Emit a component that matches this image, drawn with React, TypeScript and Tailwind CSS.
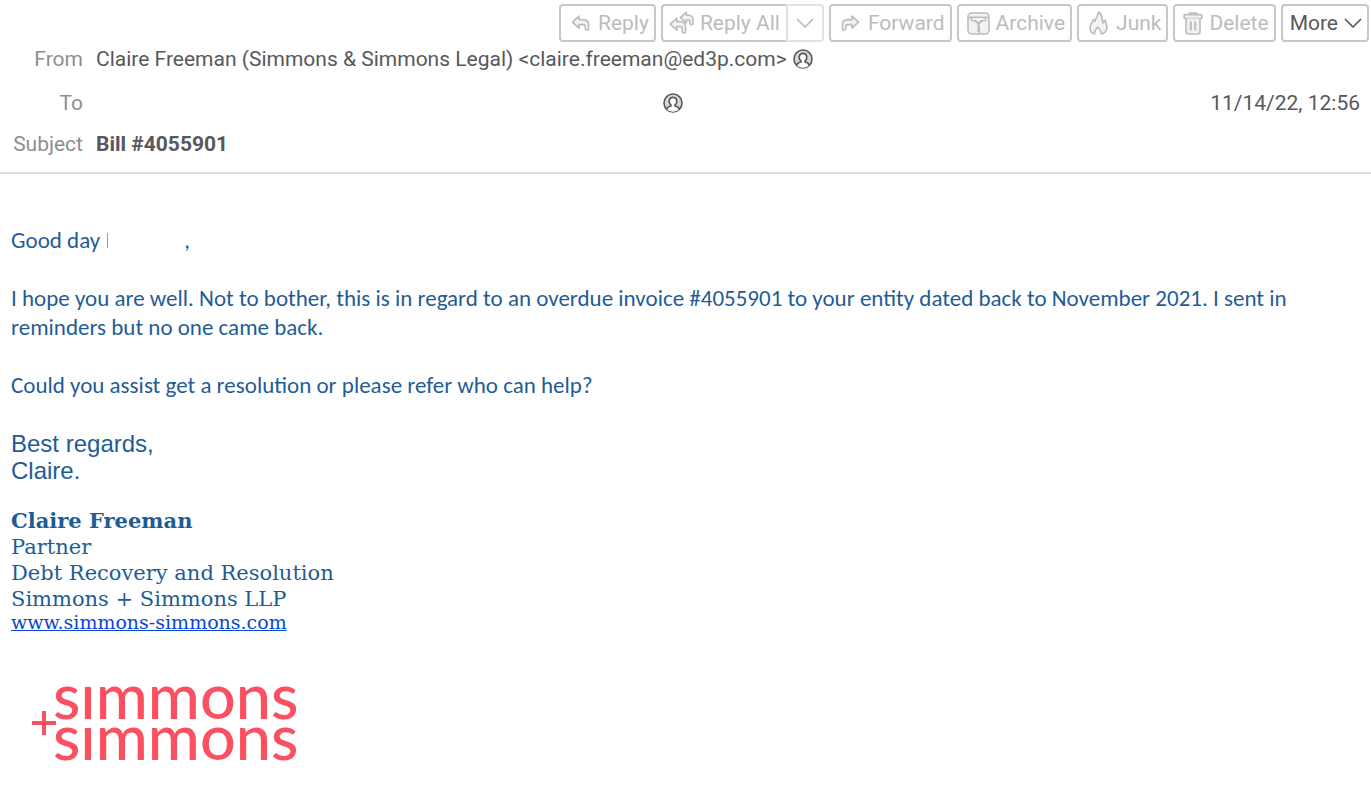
import type { ReactNode } from "react";

function ReplyIcon() {
  return (
    <svg width="19" height="17" viewBox="0 0 19 17" fill="#f2f2f2" stroke="currentColor" strokeWidth="1.6" strokeLinejoin="round" aria-hidden="true">
      <path d="M1.5 7.2 8 1.2V4.6H12C15.6 4.6 17.6 6.6 17.6 10V14.2Q16 16 14.2 14.2V11.4Q14.2 9.6 12.4 9.6H8V13.2Z" />
    </svg>
  );
}

function ReplyAllIcon() {
  return (
    <svg width="25" height="24" viewBox="0 0 25 24" fill="#f2f2f2" stroke="currentColor" strokeWidth="1.6" strokeLinejoin="round" aria-hidden="true">
      <path d="M11.4 6.6 17.4 1.2V4.2H19.4C22.4 4.2 24 6 24 9V13Q22.6 14.6 21 13V10.6Q21 9 19.3 9H17.4V12Z" />
      <path d="M1.2 13.2 7.8 7.2V10.6H11.3C14.8 10.6 16.6 12.6 16.6 16V21Q15 22.8 13.2 21V17.4Q13.2 15.6 11.3 15.6H7.8V19.2Z" />
    </svg>
  );
}

function ForwardIcon() {
  return (
    <svg width="19" height="17" viewBox="0 0 19 17" fill="#f2f2f2" stroke="currentColor" strokeWidth="1.6" strokeLinejoin="round" aria-hidden="true">
      <path d="M17.5 7.2 11 1.2V4.6H7C3.4 4.6 1.4 6.6 1.4 10V14.2Q3 16 4.8 14.2V11.4Q4.8 9.6 6.6 9.6H11V13.2Z" />
    </svg>
  );
}

function ArchiveIcon() {
  return (
    <svg width="23" height="23" viewBox="0 0 23 23" fill="none" stroke="currentColor" strokeWidth="1.6" strokeLinejoin="round" aria-hidden="true">
      <rect x="1" y="1" width="21" height="21" rx="4" fill="#f2f2f2" />
      <path d="M1.5 5.5H21.5" />
      <path d="M4.5 5.5V8.5H7L11.5 12 16 8.5H18.5V5.5Z" fill="#fff" strokeWidth="1.3" />
      <path d="M8 7.8 11.5 11 15 7.8" />
      <path d="M11 12V13.5H12.5V15H11V16.5H12.5V18H11V19.5H12.5V21.5" strokeWidth="1.3" />
    </svg>
  );
}

function JunkIcon() {
  return (
    <svg width="19" height="24" viewBox="0 0 19 24" fill="#f2f2f2" stroke="currentColor" strokeWidth="1.6" strokeLinejoin="round" aria-hidden="true">
      <path d="M9.5 1C9.5 4.5 6.5 6.5 5.8 10.5L4 8.5C4 11 1 13 1 17 1 20 2.6 22.2 5.5 23 4.8 20 7 18.4 8.5 16 10.5 18 12.5 20 12 23 15.8 22 18 19.5 18 16.5 18 13.5 16.3 12.2 16.3 9.2 14.8 9.8 14.2 11 14 12.2 12.6 8.5 14.2 4 9.5 1Z" />
    </svg>
  );
}

function DeleteIcon() {
  return (
    <svg width="20" height="23" viewBox="0 0 20 23" fill="none" stroke="currentColor" strokeWidth="1.6" strokeLinejoin="round" aria-hidden="true">
      <path d="M6.5 3V1H13.5V3" />
      <rect x="1" y="2.6" width="18" height="4" rx="1.6" fill="#f2f2f2" />
      <path d="M3 6.6V19.5Q3 22 5.5 22H14.5Q17 22 17 19.5V6.6" fill="#f2f2f2" />
      <path d="M7.8 9.5V18.5M12.2 9.5V18.5" strokeWidth="2" />
    </svg>
  );
}

function ChevronIcon() {
  return (
    <svg width="18" height="11" viewBox="0 0 18 11" fill="none" stroke="currentColor" strokeWidth="1.7" strokeLinecap="round" strokeLinejoin="round" aria-hidden="true">
      <path d="M1.5 1.5 9 9 16.5 1.5" />
    </svg>
  );
}

function ContactIcon() {
  return (
    <svg width="20" height="20" viewBox="0 0 20 20" fill="none" stroke="#58585b" strokeWidth="1.6" strokeLinejoin="round" aria-hidden="true">
      <circle cx="10" cy="10" r="9" fill="#d8d8d8" />
      <path d="M4.2 17V15.6Q4.4 13.6 8 13V11.8C5.2 9.6 5.6 4.4 10 4.4S14.8 9.6 12 11.8V13Q15.6 13.6 15.8 15.6V17Q10 20.6 4.2 17Z" fill="#fff" stroke="none" />
      <path d="M4.2 16.6V15.6Q4.4 13.6 8 13V11.8C5.2 9.6 5.6 4.4 10 4.4S14.8 9.6 12 11.8V13Q15.6 13.6 15.8 15.6V16.6" />
    </svg>
  );
}

function ToolButton({ icon, label, tight }: { icon: ReactNode; label: string; tight?: boolean }) {
  return (
    <button
      type="button"
      disabled
      className={`flex h-[38px] items-center rounded border-2 border-[#c8c8c8] pr-[5px] text-[#bcbcbc] ${
        tight ? "gap-[6px] pl-[8px]" : "gap-[8px] pl-[10px]"
      }`}
    >
      {icon}
      {label}
    </button>
  );
}

function HeaderRow({ label, children }: { label: string; children?: ReactNode }) {
  return (
    <div className="flex items-center gap-[13px]">
      <dt className="w-[83px] shrink-0 text-right text-[#8e8e90]">{label}</dt>
      <dd className="flex flex-1 items-center gap-[6px]">{children}</dd>
    </div>
  );
}

export default function App() {
  return (
    <main className="min-h-screen bg-white">
      <header className="border-b-2 border-[#dcdcdc] pb-[14px] font-['Roboto',sans-serif] text-[21px] leading-[28px] text-[#58585b]">
        <div className="flex justify-end gap-[5px] pr-[2px] pt-[4px]">
          <ToolButton icon={<ReplyIcon />} label="Reply" />
          <div className="flex h-[38px] text-[#bcbcbc]">
            <button
              type="button"
              disabled
              className="flex items-center gap-[6px] rounded-l border-2 border-r-0 border-[#c8c8c8] pl-[6px] pr-[6px]"
            >
              <ReplyAllIcon />
              Reply All
            </button>
            <button
              type="button"
              disabled
              aria-label="Reply options"
              className="flex w-[38px] items-center justify-center rounded-r border-2 border-[#e2e2e2]"
            >
              <ChevronIcon />
            </button>
          </div>
          <ToolButton icon={<ForwardIcon />} label="Forward" />
          <ToolButton icon={<ArchiveIcon />} label="Archive" tight />
          <ToolButton icon={<JunkIcon />} label="Junk" />
          <ToolButton icon={<DeleteIcon />} label="Delete" tight />
          <button
            type="button"
            className="flex h-[38px] items-center gap-[6px] rounded border-2 border-[#c8c8c8] pl-[7px] pr-[5px]"
          >
            More
            <ChevronIcon />
          </button>
        </div>

        <dl className="pr-[11px] pt-[3px]">
          <HeaderRow label="From">
            <span>Claire Freeman (Simmons &amp; Simmons Legal) &lt;claire.freeman@ed3p.com&gt;</span>
            <ContactIcon />
          </HeaderRow>
          <div className="h-[16px]" />
          <HeaderRow label="To">
            <span className="w-[561px]" />
            <ContactIcon />
            <time className="ml-auto">11/14/22, 12:56</time>
          </HeaderRow>
          <div className="h-[13px]" />
          <HeaderRow label="Subject">
            <strong className="font-bold">Bill #4055901</strong>
          </HeaderRow>
        </dl>
      </header>

      <article className="px-[11px] pt-[52px] text-[#1f5c96]">
        <div className="space-y-[29px] font-['Carlito','Lato',sans-serif] text-[23px] leading-[29px]">
          <p className="flex items-center">
            Good day
            <span className="ml-[7px] mr-[76px] h-[15px] w-px bg-[#7d9fc2]" />
            ,
          </p>
          <p>
            I hope you are well. Not to bother, this is in regard to an overdue invoice #4055901 to your entity dated back to November 2021. I sent in reminders but no one came back.
          </p>
          <p>Could you assist get a resolution or please refer who can help?</p>
        </div>

        <p className="pt-[30px] font-['Liberation_Sans',sans-serif] text-[24px] leading-[27px]">
          Best regards,
          <br />
          Claire.
        </p>

        <address className="pt-[24px] font-['DejaVu_Serif',serif] text-[21px] leading-[26px] not-italic">
          <strong className="block font-bold">Claire Freeman</strong>
          <span className="block">Partner</span>
          <span className="block">Debt Recovery and Resolution</span>
          <span className="block">Simmons + Simmons LLP</span>
          <a href="http://www.simmons-simmons.com" className="block text-[19px] leading-[20px] text-[#0a45d6] underline">
            www.simmons-simmons.com
          </a>
        </address>

        <div
          role="img"
          aria-label="Simmons + Simmons"
          className="flex items-center pl-[21px] pt-[42px] font-['Lato',sans-serif] font-medium text-[#fb5061]"
        >
          <svg width="24" height="40" viewBox="0 0 24 40" stroke="currentColor" strokeWidth="4">
            <path d="M12 16V40M0 28H24" />
          </svg>
          <div className="-ml-[3px] text-[63px] leading-[41px]">
            <div>sımmons</div>
            <div>sımmons</div>
          </div>
        </div>
      </article>
    </main>
  );
}
